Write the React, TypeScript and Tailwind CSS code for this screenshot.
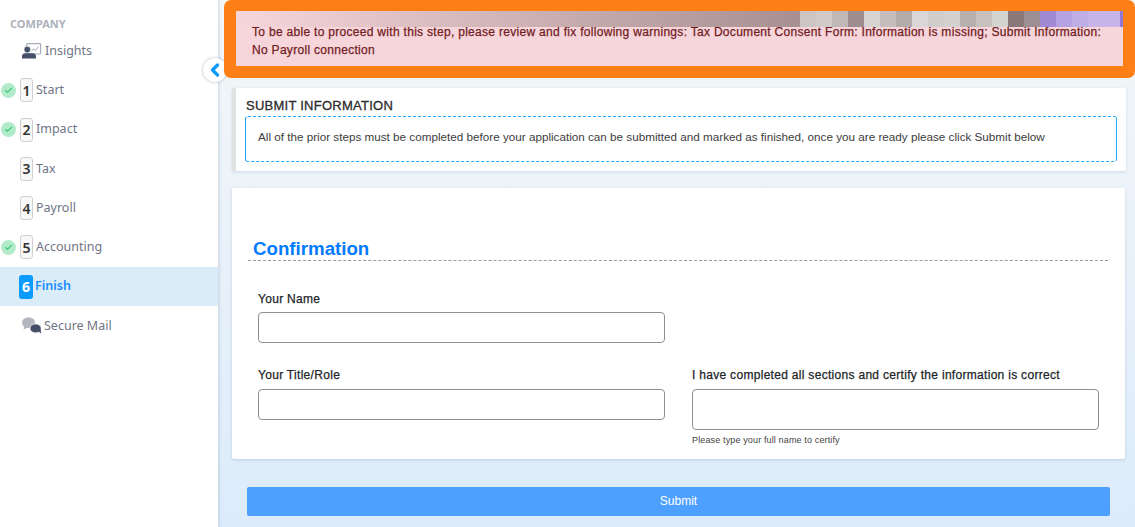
import { Check, ChevronLeft } from "lucide-react";

const steps = [
  { n: 1, label: "Start", done: true },
  { n: 2, label: "Impact", done: true },
  { n: 3, label: "Tax", done: false },
  { n: 4, label: "Payroll", done: false },
  { n: 5, label: "Accounting", done: true },
];

// mosaic over the redacted part of the alert, left to right
const mosaic = [
  "#ccc5c3", "#d0cbc9", "#c0b8b6", "#9d8d8e", "#d6d3d3", "#c5bdbd", "#b3abaa", "#d8d6d7", "#d0cdcc", "#d4d2d0",
  "#b8b0af", "#c6c0bf", "#d3d3d1", "#8a7878", "#9e8f95", "#a08ad6", "#b5a2e2", "#bdaee6", "#c7b5ea", "#c7b5ea",
];

function InsightsIcon() {
  return (
    <svg width="20" height="16" viewBox="0 0 20 16" className="shrink-0">
      <rect x="4.6" y="0.6" width="14" height="10.4" rx="0.8" fill="none" stroke="#a9adb8" strokeWidth="1.2" />
      <path d="M9.5 8l2.5-2 1.8 1.2L16.5 3.5" fill="none" stroke="#a9adb8" strokeWidth="1" />
      <circle cx="5.3" cy="6.6" r="3.3" fill="#454f68" stroke="#ffffff" strokeWidth="0.6" />
      <path d="M0 15.5v-2c0-2 1.6-3.2 3-3.2h8c1.4 0 3 1.2 3 3.2v2z" fill="#454f68" />
    </svg>
  );
}

function MailIcon() {
  return (
    <svg width="20" height="17" viewBox="0 0 20 17" className="shrink-0">
      <ellipse cx="6.5" cy="5.6" rx="6.5" ry="5.4" fill="#b4b7c0" />
      <path d="M2.5 8.5L1.5 12.5l4.5-2z" fill="#b4b7c0" />
      <ellipse cx="13.6" cy="11.4" rx="5.6" ry="4.5" fill="#454f68" stroke="#ffffff" strokeWidth="0.7" />
      <path d="M16 14l3 2.6-.2-4z" fill="#454f68" />
    </svg>
  );
}

function StepRow({ n, label, done }: { n: number; label: string; done: boolean }) {
  return (
    <div className="relative flex h-[39.25px] items-center pl-[20px]">
      {done && (
        <span className="absolute left-[1px] top-[12px] flex h-[15px] w-[15px] items-center justify-center rounded-full bg-[#b2ebc9]">
          <Check size={9} strokeWidth={3} className="text-[#3cc878]" />
        </span>
      )}
      <span className="flex h-[24px] w-[13px] items-center justify-center rounded-[3px] border border-[#cfcfcf] bg-[#f8f8f8] text-[14px] font-semibold text-[#333]">
        {n}
      </span>
      <span className="ml-[3px] text-[12.5px] text-[#6f7585]">{label}</span>
    </div>
  );
}

function Field({ label, tall, loose, hint }: { label: string; tall?: boolean; loose?: boolean; hint?: string }) {
  return (
    <div className="flex w-[407px] flex-col">
      <label className="h-[18px] text-[12px] leading-[18px] font-medium tracking-[0.3px] whitespace-nowrap text-[#212529] [-webkit-text-stroke:0.25px_#212529]">{label}</label>
      <input
        className={`${loose ? "mt-[5px]" : "mt-[4px]"} w-full rounded-[4px] border border-[#8f8f8f] bg-white ${tall ? "h-[41px]" : "h-[31px]"}`}
      />
      {hint && <span className="mt-[4px] text-[9px] leading-[12px] tracking-[0.14px] text-[#444]">{hint}</span>}
    </div>
  );
}

export default function App() {
  return (
    <div className="flex h-[527px] w-[1135px] overflow-hidden font-['Liberation_Sans',sans-serif]">
      {/* Sidebar */}
      <aside className="relative z-10 w-[218px] shrink-0 bg-white pt-[16px] font-['Noto_Sans',sans-serif] shadow-[1px_0_3px_rgba(120,140,170,0.3)]">
        <div className="h-[15.5px] pl-[10px] text-[11px] leading-[15px] font-bold text-[#adb1bb]">COMPANY</div>
        <div className="flex h-[39.25px] items-center gap-[3px] pl-[22px] text-[12.5px] text-[#6f7585]">
          <InsightsIcon />
          Insights
        </div>
        {steps.map((s) => (
          <StepRow key={s.n} {...s} />
        ))}
        <div className="flex h-[39.25px] items-center bg-[#daecf8] pl-[19px]">
          <span className="flex h-[24px] w-[14px] items-center justify-center rounded-[3px] bg-[#0a9bff] text-[14px] font-bold text-white">
            6
          </span>
          <span className="ml-[2px] text-[12.5px] font-semibold text-[#1a8cff]">Finish</span>
        </div>
        <div className="flex h-[39.25px] items-center gap-[2px] pl-[22px] text-[12.5px] text-[#6f7585]">
          <MailIcon />
          Secure Mail
        </div>
        {/* collapse toggle */}
        <button className="absolute left-[203px] top-[58px] flex h-[24px] w-[24px] items-center justify-start rounded-full bg-white pl-[2px] shadow-[0_0_3px_rgba(90,110,140,0.5)]">
          <ChevronLeft size={20} strokeWidth={4} className="text-[#0a9bff]" />
        </button>
      </aside>

      {/* Main */}
      <main className="flex-1 bg-gradient-to-b from-[#f4f7f8] to-[#dcebfb]">
        <div className="relative z-20 ml-[6px] rounded-[7px] border-x-[12px] border-t-[11px] border-b-[12px] border-[#ff7f17] bg-[#f6d6da] px-[16px] pt-[12px] pb-[7px]">
          <p className="text-[12px] leading-[18px] font-medium tracking-[0.3px] text-[#721c24] [-webkit-text-stroke:0.25px_#721c24]">
            To be able to proceed with this step, please review and fix following warnings: Tax Document Consent Form: Information is missing; Submit Information: No Payroll connection
          </p>
          {/* redacted strip */}
          <div className="absolute inset-x-0 top-0 flex h-[16px]">
            <div className="w-[564px] bg-gradient-to-r from-[#f6d6da] to-[#a89090]" />
            <div className="flex-1 bg-[#ab9999]" />
            {mosaic.map((c, i) => (
              <div key={i} className="h-full w-[16px]" style={{ backgroundColor: c }} />
            ))}
            <div className="h-full w-[3px] bg-[#8f78d8]" />
          </div>
        </div>

        <section className="mt-[10px] ml-[14px] h-[83px] w-[894px] rounded-[2px] border-l-[4px] border-[#dfe3e3] bg-white pt-[9px] pl-[9px] shadow-[0_1px_3px_rgba(120,140,170,0.25)]">
          <h2 className="ml-[1px] h-[19px] text-[13px] leading-[17px] font-medium tracking-[0.25px] text-[#2b2b2b] [-webkit-text-stroke:0.3px_#2b2b2b]">SUBMIT INFORMATION</h2>
          <div className="h-[46px] w-[872px] rounded-[3px] border border-dashed border-[#1ea7fd] pt-[12px] pl-[12px] text-[11.7px] leading-[16px] text-[#3d3d3d] [border-left-style:solid] [border-right-style:solid]">
            All of the prior steps must be completed before your application can be submitted and marked as finished, once you are ready please click Submit below
          </div>
        </section>

        <section className="mt-[17px] ml-[14px] h-[271px] w-[893px] rounded-[2px] bg-white pt-[50px] shadow-[0_1px_3px_rgba(120,140,170,0.3)]">
          <h1 className="ml-[16px] w-[860px] border-b border-dashed border-[#9a9a9a] pl-[5px] text-[18.7px] leading-[22px] font-bold text-[#007bff]">
            Confirmation
          </h1>
          <div className="mt-[29px] ml-[26px]">
            <Field label="Your Name" />
            <div className="mt-[23px] flex gap-[27px]">
              <Field label="Your Title/Role" loose />
              <Field label="I have completed all sections and certify the information is correct" tall loose hint="Please type your full name to certify" />
            </div>
          </div>
        </section>

        <button className="mt-[28px] ml-[29px] block h-[29px] w-[863px] rounded-[2px] bg-[#4da0ff] pb-[2px] text-[12px] text-white">
          Submit
        </button>
      </main>
    </div>
  );
}
